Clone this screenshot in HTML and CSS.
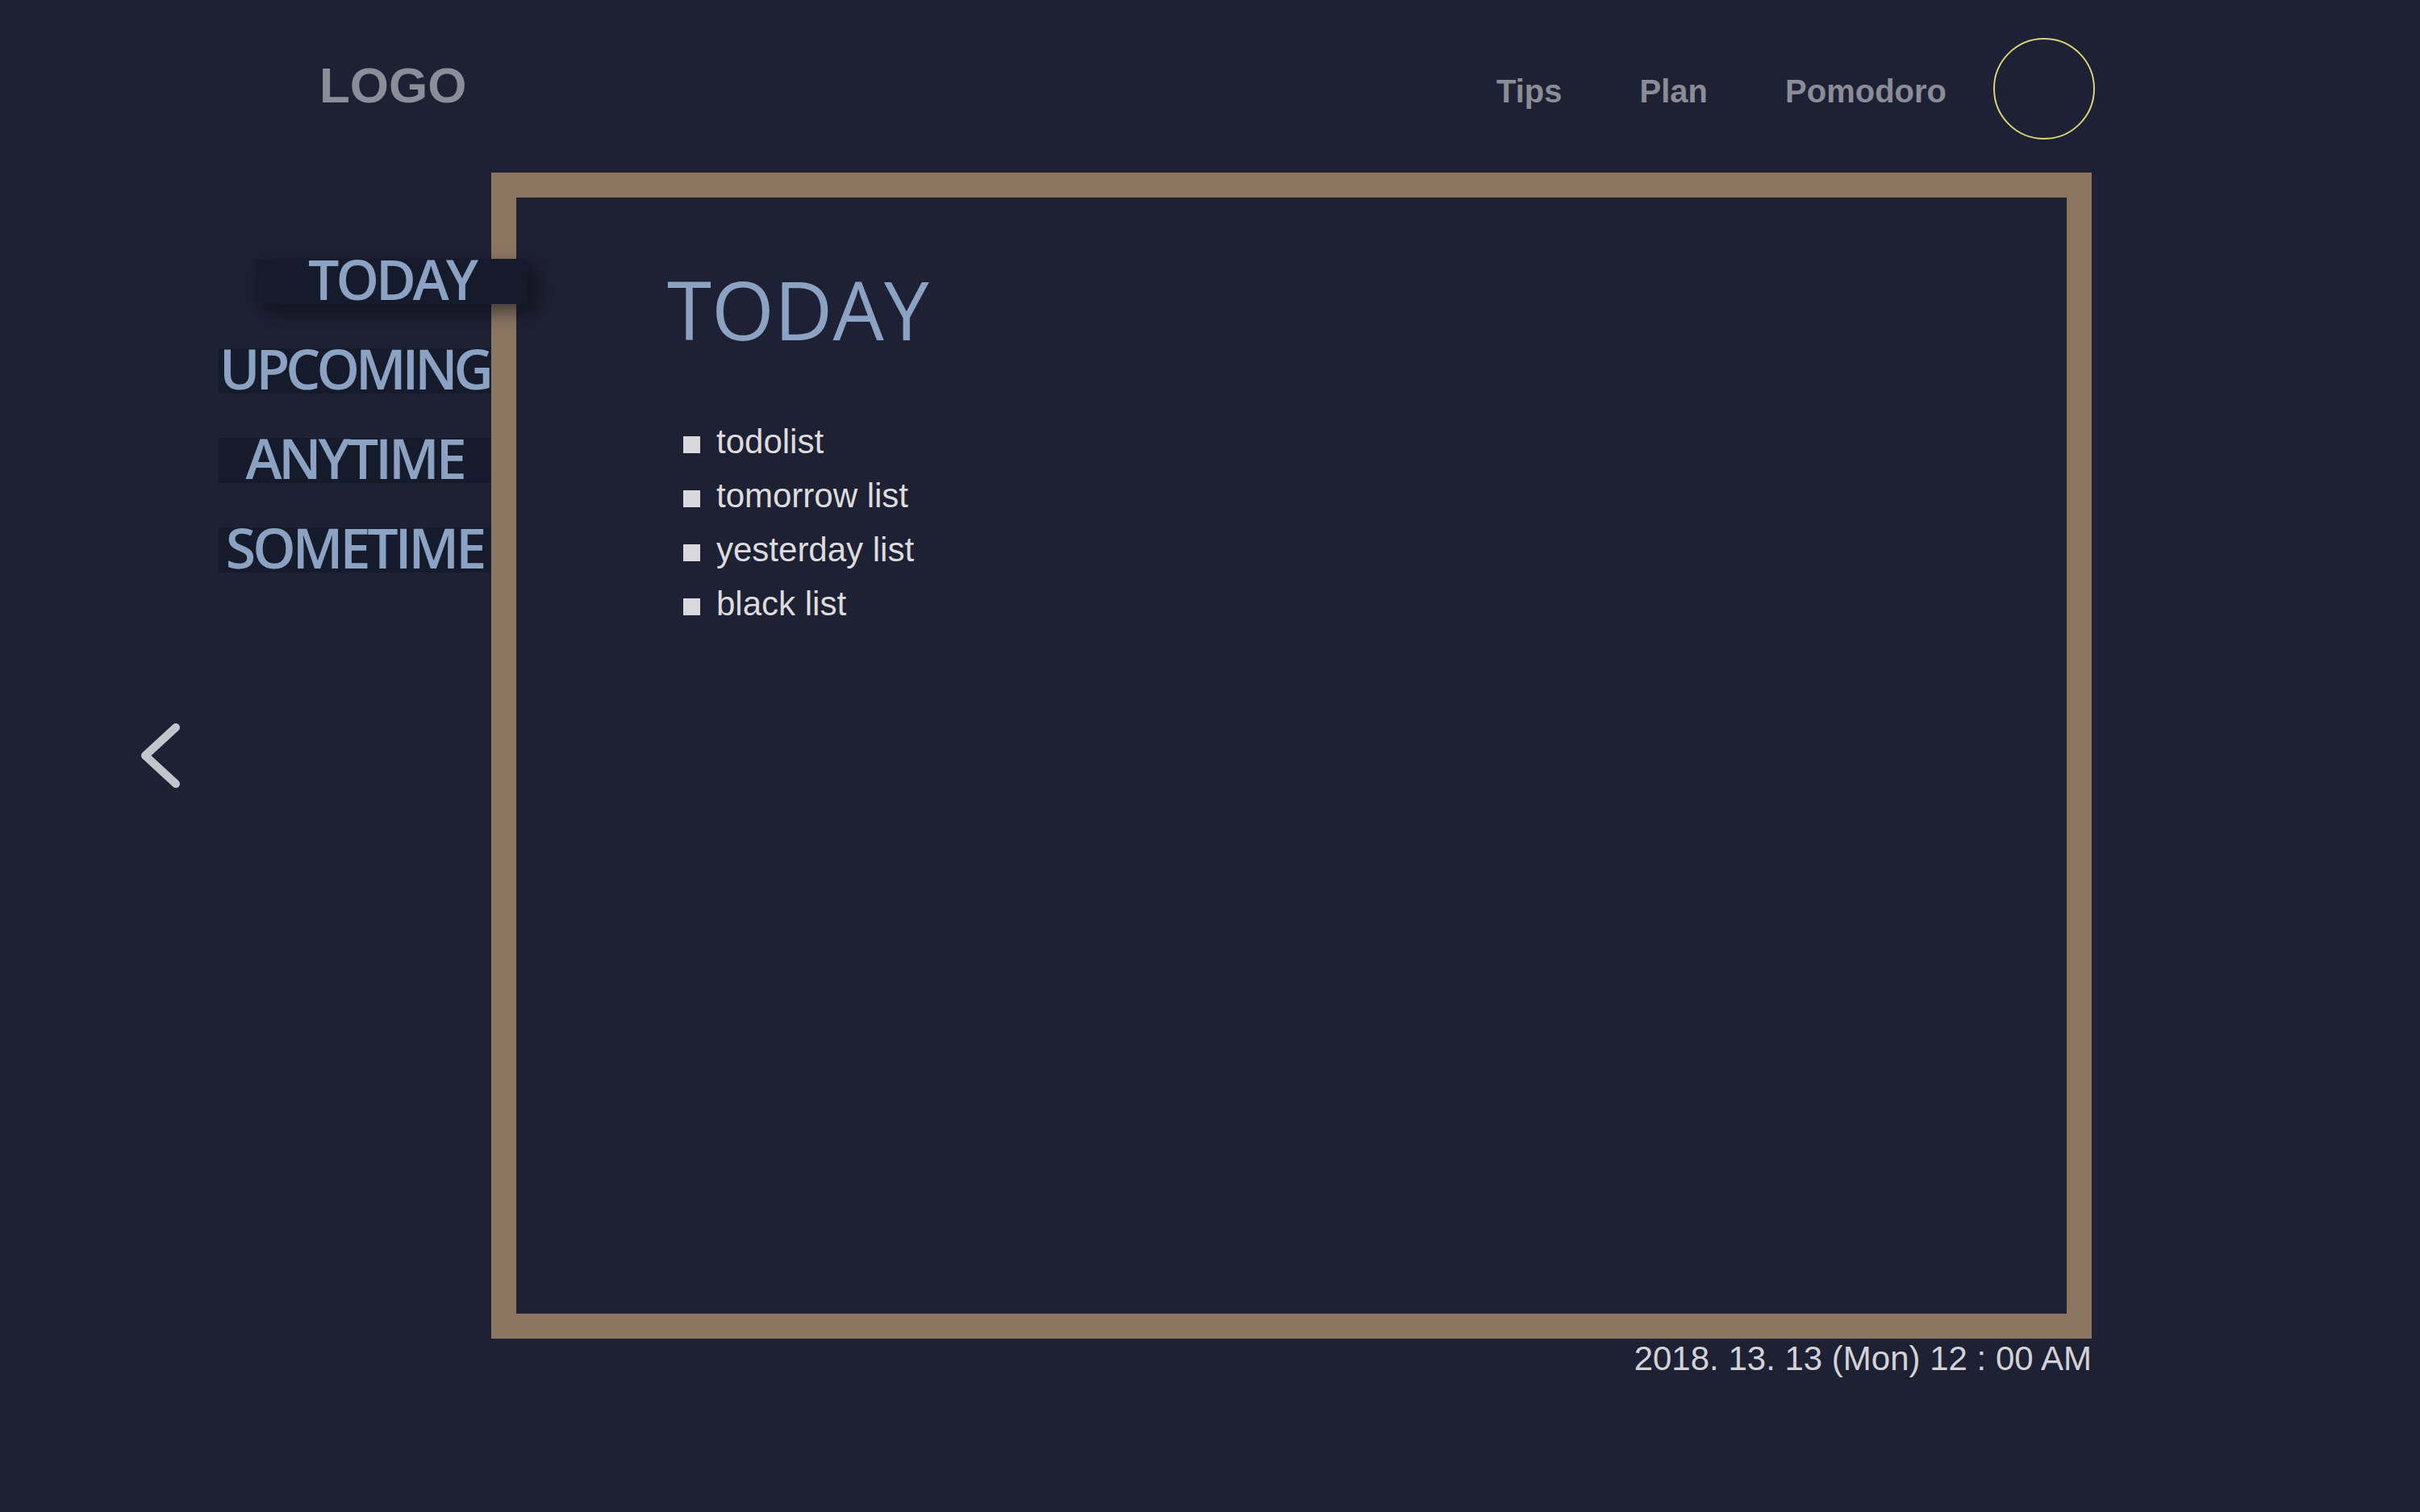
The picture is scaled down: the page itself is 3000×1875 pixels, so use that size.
FILE: index.html
```html
<!DOCTYPE html>
<html lang="en">
<head>
<meta charset="utf-8">
<title>Today</title>
<link rel="stylesheet" href="styles.css">
</head>
<body>
<div class="page">
  <header class="topbar">
    <div class="logo">LOGO</div>
    <nav class="nav">
      <a class="nav-link" href="#">Tips</a>
      <a class="nav-link" href="#">Plan</a>
      <a class="nav-link" href="#">Pomodoro</a>
      <span class="avatar"></span>
    </nav>
  </header>
  <div class="workspace">
    <div class="back-col">
      <svg class="back" width="60" height="90" viewBox="0 0 60 90">
        <polyline points="48,10 10,45 48,80" fill="none" stroke="#c3c5cc" stroke-width="10" stroke-linecap="round" stroke-linejoin="round"/>
      </svg>
    </div>
    <aside class="sidebar">
      <div class="tab tab-active">TODAY</div>
      <div class="tab tab-tight">UPCOMING</div>
      <div class="tab">ANYTIME</div>
      <div class="tab">SOMETIME</div>
    </aside>
    <div class="board">
      <section class="frame">
        <h1 class="title">TODAY</h1>
        <ul class="lists">
          <li>todolist</li>
          <li>tomorrow list</li>
          <li>yesterday list</li>
          <li>black list</li>
        </ul>
      </section>
      <div class="datetime">2018. 13. 13 (Mon) 12 : 00 AM</div>
    </div>
  </div>
</div>
</body>
</html>
```

FILE: styles.css
```css
html, body {
  margin: 0;
  padding: 0;
  background: #1e2033;
}

.page {
  width: 3000px;
  height: 1875px;
  background: #1e2033;
  overflow: hidden;
}

.topbar {
  display: flex;
  justify-content: space-between;
  align-items: center;
  padding: 47px 403px 0 396px;
  height: 126px;
  margin-bottom: 41px;
}

.logo {
  font-family: "Liberation Sans", Arial, sans-serif;
  font-weight: 700;
  font-size: 62px;
  line-height: 1;
  color: #8b8e99;
  margin-bottom: 8px;
}

.nav {
  display: flex;
  align-items: center;
  gap: 96px;
}

.nav-link {
  font-family: "Liberation Sans", Arial, sans-serif;
  font-weight: 700;
  font-size: 40px;
  line-height: 1;
  color: #8a8d98;
  text-decoration: none;
  margin-top: 6px;
}

.avatar {
  width: 122px;
  height: 122px;
  border: 2.5px solid #d6d478;
  border-radius: 50%;
  margin-left: -38px;
}

.workspace {
  display: flex;
  align-items: flex-start;
}

.back-col {
  width: 271px;
  flex: none;
  box-sizing: border-box;
  padding: 678px 0 0 170px;
}

.back {
  display: block;
}

.sidebar {
  width: 338px;
  flex: none;
  display: flex;
  flex-direction: column;
  gap: 55px;
  padding-top: 107px;
  position: relative;
  z-index: 2;
}

.tab {
  width: 337px;
  box-sizing: border-box;
  background: #151b2a;
  font-family: "Open Sans", "Noto Sans", sans-serif;
  font-weight: 600;
  font-size: 68px;
  line-height: 49px;
  padding-bottom: 7px;
  letter-spacing: -4px;
  color: #8ba2c3;
  text-align: center;
  white-space: nowrap;
}

.tab-tight {
  letter-spacing: -5px;
}

.tab-active {
  margin-left: 46px;
  box-shadow: 10px 10px 22px rgba(8, 10, 18, 0.55);
}

.board {
  width: 1984px;
  flex: none;
  display: flex;
  flex-direction: column;
  align-items: flex-end;
}

.frame {
  width: 1984px;
  height: 1446px;
  box-sizing: border-box;
  border: 31px solid #8c7662;
  padding: 88px 0 0 187px;
  background: #1e2033;
}

.title {
  margin: 0;
  font-family: "Open Sans", "Noto Sans", sans-serif;
  font-weight: 400;
  font-size: 100px;
  line-height: 100px;
  letter-spacing: 0;
  color: #8ba2c3;
}

.lists {
  list-style: none;
  margin: 81px 0 0 20px;
  padding: 0;
}

.lists li {
  font-family: "Liberation Sans", Arial, sans-serif;
  font-size: 42px;
  line-height: 67px;
  color: #dcdcdf;
}

.lists li::before {
  content: "";
  display: inline-block;
  width: 21px;
  height: 21px;
  background: #d9d9dc;
  margin-right: 20px;
  vertical-align: baseline;
}

.datetime {
  margin-top: 4px;
  font-family: "Liberation Sans", Arial, sans-serif;
  font-size: 42px;
  line-height: 1;
  color: #d2d3d9;
}
```
